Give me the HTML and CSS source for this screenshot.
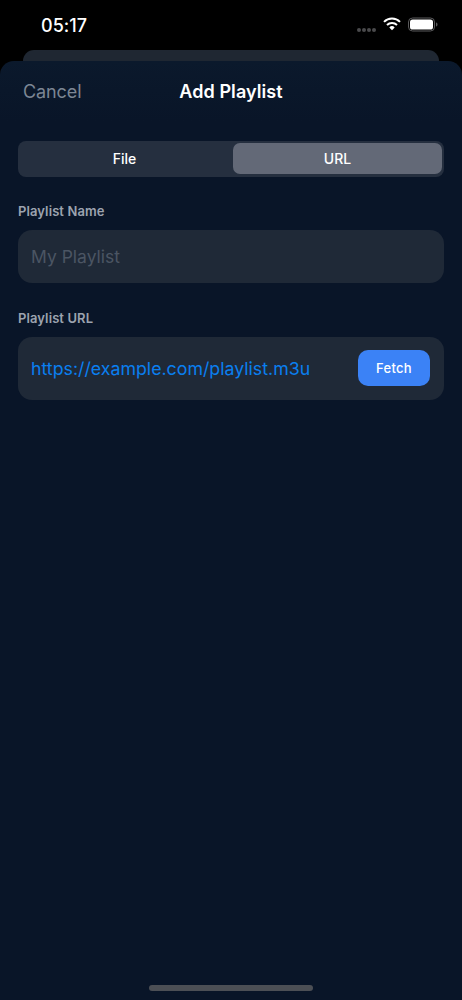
FILE: index.html
```html
<!DOCTYPE html>
<html lang="en">
<head>
<meta charset="utf-8">
<title>Add Playlist</title>
<link rel="stylesheet" href="styles.css">
</head>
<body>
<div class="phone">
  <header class="status">
    <span class="time">05:17</span>
    <div class="status-icons">
      <span class="signal"><i></i><i></i><i></i><i></i></span>
      <svg class="wifi" width="18" height="14" viewBox="0 0 18 14" aria-hidden="true">
        <path d="M1 4.9a11.4 11.4 0 0 1 16 0" fill="none" stroke="#fff" stroke-width="2"/>
        <path d="M4 8a7.2 7.2 0 0 1 10 0" fill="none" stroke="#fff" stroke-width="2"/>
        <path d="M9 13.2 6.3 10.4a3.900 3.900 0 0 1 5.400 0z" fill="#fff"/>
      </svg>
      <svg class="battery" width="30" height="15" viewBox="0 0 30 15" aria-hidden="true">
        <rect x="0.5" y="1" width="26" height="13" rx="4" fill="none" stroke="#5a5a5c"/>
        <rect x="2" y="2.5" width="23" height="10" rx="2.600" fill="#fff"/>
        <path d="M28 5.500c1 .3 1.500 1 1.500 2s-.5 1.700-1.500 2z" fill="#5a5a5c"/>
      </svg>
    </div>
  </header>
  <div class="back-card"></div>
  <main class="sheet">
    <div class="nav">
      <span class="cancel">Cancel</span>
      <h1 class="title">Add Playlist</h1>
    </div>
    <div class="segments">
      <div class="segment">File</div>
      <div class="segment active">URL</div>
    </div>
    <label class="label">Playlist Name</label>
    <div class="field name-field"><span class="placeholder">My Playlist</span></div>
    <label class="label label-url">Playlist URL</label>
    <div class="field url-field">
      <span class="url">https://example.com/playlist.m3u</span>
      <button class="fetch">Fetch</button>
    </div>
    <div class="home-indicator"></div>
  </main>
</div>
</body>
</html>
```
FILE: styles.css
```css
* { box-sizing: border-box; }
html, body { margin: 0; padding: 0; background: #000; }
body { font-family: Inter, "Liberation Sans", sans-serif; overflow: hidden; }
.phone { width: 462px; height: 1000px; display: flex; flex-direction: column; background: #000; }
.status { height: 50px; flex: none; display: flex; justify-content: space-between; align-items: center; padding: 0 24px 0 41px; }
.time { color: #fff; font-size: 18px; font-weight: 500; line-height: 22px; margin-top: 2px; letter-spacing: 0.05px; }
.status-icons { display: flex; align-items: center; }
.signal { display: flex; gap: 1px; margin: 9px 7px 0 0; }
.signal i { width: 4px; height: 4px; border-radius: 50%; background: #4a4a4c; }
.wifi { margin-right: 7px; margin-top: -2px; }
.battery { margin-top: -1px; }
.back-card { height: 11px; flex: none; margin: 0 23px; background: #1f2732; border-radius: 11px 11px 0 0; }
.sheet { flex: 1; display: flex; flex-direction: column; background: linear-gradient(#0b192c, #091528 60px); border-radius: 14px 14px 0 0; padding: 0 18px; }
.nav { height: 62px; flex: none; margin: 0 0 18px; display: flex; align-items: center; justify-content: center; position: relative; }
.cancel { position: absolute; left: 5px; top: 20px; color: #7c8694; font-size: 18px; line-height: 22px; letter-spacing: -0.1px; }
.title { margin: 0; color: #fff; font-size: 18px; font-weight: 600; line-height: 22px; letter-spacing: 0.08px; }
.segments { height: 36px; display: flex; padding: 2px; background: #252f3f; border-radius: 8px; }
.segment { flex: 1; display: flex; align-items: center; justify-content: center; color: #fff; font-size: 14px; font-weight: 500; border-radius: 7px; margin-bottom: 1px; padding-right: 4px; }
.segment.active { background: #636977; flex: 0 0 209px; padding-right: 0; }
.label { display: block; margin-top: 26px; color: #9ca3af; font-size: 13px; font-weight: 600; line-height: 16px; letter-spacing: 0.1px; }
.label-url { margin-top: 27px; }
.field { margin-top: 11px; background: #1f2937; border-radius: 14px; display: flex; align-items: center; padding: 0 14px 0 13px; }
.name-field { height: 53px; }
.url-field { height: 63px; justify-content: space-between; padding-bottom: 1px; }
.placeholder { color: #4b5563; font-size: 17.5px; }
.url { color: #0a7ff0; font-size: 17.75px; margin-top: 1px; }
.fetch { width: 72px; height: 36px; border: 0; border-radius: 10px; background: #3b82f6; color: #fff; font: 500 13px Inter, "Liberation Sans", sans-serif; letter-spacing: 0.3px; }
.home-indicator { width: 164px; height: 6px; border-radius: 3px; background: #4c4f55; margin: auto auto 9px; }
```
